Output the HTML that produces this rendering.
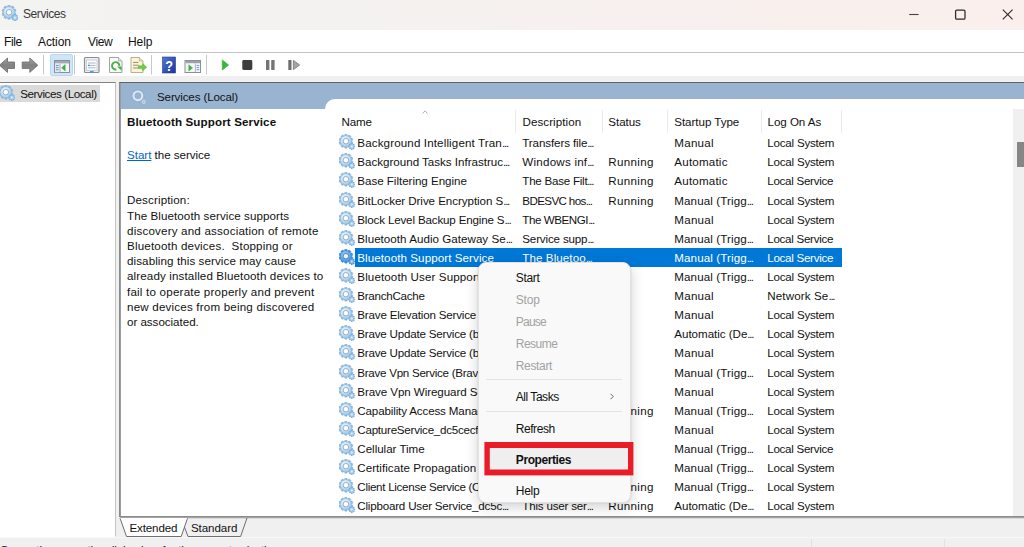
<!DOCTYPE html>
<html><head><meta charset="utf-8"><title>Services</title>
<style>
*{box-sizing:border-box;margin:0;padding:0}
html,body{width:1024px;height:547px;overflow:hidden;background:#f0f0f0}
body{position:relative;font-family:"Liberation Sans",sans-serif;font-size:11.6px;color:#111;letter-spacing:-0.12px}
.abs{position:absolute}
.ic{position:absolute;overflow:visible}
.t{position:absolute;white-space:nowrap;line-height:16px;height:16px}
.e{letter-spacing:-1.25px}
#title{left:0;top:0;width:1024px;height:30px;background:linear-gradient(90deg,#f3f3f2 0%,#f4f2f0 35%,#f7f0ee 60%,#faefec 100%)}
#menubar{left:0;top:30px;width:1024px;height:22px;background:#fff}
#toolbar{left:0;top:52px;width:1024px;height:24px;background:#fff;border-top:1px solid #c2c4c8}
#left{left:0;top:82px;width:116px;height:455px;background:#fff;border-top:1px solid #828282;border-right:1px solid #c4c4c4;border-bottom:1px solid #fff}
#right{left:119px;top:82px;width:910px;height:435px;background:#fff;border-top:1px solid #626262;border-left:1px solid #8a8a8a;border-bottom:1px solid #868686}
#right2{left:120px;top:83px;width:1px;height:434px;background:#9c9c9c}
#bluehdr{left:121px;top:83px;width:903px;height:26px;background:#99b4d1}
#listbg{left:325px;top:98.7px;width:699px;height:20px;background:#fff;border-top-left-radius:10px}
.row{position:absolute;left:355px;width:487px;height:19px;background:#0078d7}
.sel{color:#fff}
.sep{position:absolute;top:110px;width:1px;height:23px;background:#ebebeb}
#menu{left:477.5px;top:262px;width:153.5px;height:240.5px;background:#f9f9f9;border:1px solid #e2e2e2;border-radius:8px;box-shadow:0 4px 14px rgba(0,0,0,0.18),0 0 2px rgba(0,0,0,0.12)}
.dis{color:#a2a2a2}
.msep{position:absolute;left:486px;width:136px;height:1px;background:#e3e3e3}
</style></head><body>
<svg width="0" height="0" style="position:absolute">
<defs>
<radialGradient id="gg" cx="38%" cy="32%" r="75%"><stop offset="0" stop-color="#eef7fd"/><stop offset="0.55" stop-color="#c3dff3"/><stop offset="1" stop-color="#9fc6e6"/></radialGradient>
<symbol id="gear" viewBox="0 0 16 16">
<g transform="translate(6.9,7.2)">
<g fill="#8cb8de" stroke="#78a9d4" stroke-width="0.4"><rect x="-1.35" y="-7" width="2.7" height="14" rx="0.7" transform="rotate(0)"/><rect x="-1.35" y="-7" width="2.7" height="14" rx="0.7" transform="rotate(36)"/><rect x="-1.35" y="-7" width="2.7" height="14" rx="0.7" transform="rotate(72)"/><rect x="-1.35" y="-7" width="2.7" height="14" rx="0.7" transform="rotate(108)"/><rect x="-1.35" y="-7" width="2.7" height="14" rx="0.7" transform="rotate(144)"/></g>
<circle r="5.5" fill="url(#gg)" stroke="#95bee0" stroke-width="0.5"/>
<circle r="2.75" fill="#ffffff" stroke="#8aa6c4" stroke-width="0.9"/>
</g>
<g transform="translate(12.8,12.5)">
<g fill="#7caedb"><rect x="-0.85" y="-3.4" width="1.7" height="6.8" rx="0.3" transform="rotate(0)"/><rect x="-0.85" y="-3.4" width="1.7" height="6.8" rx="0.3" transform="rotate(45)"/><rect x="-0.85" y="-3.4" width="1.7" height="6.8" rx="0.3" transform="rotate(90)"/><rect x="-0.85" y="-3.4" width="1.7" height="6.8" rx="0.3" transform="rotate(135)"/></g>
<circle r="2.3" fill="#a3cbea"/>
<circle r="0.95" fill="#e9f3fb"/>
</g>
</symbol>
<radialGradient id="ggs" cx="38%" cy="32%" r="75%"><stop offset="0" stop-color="#9fcdf3"/><stop offset="0.55" stop-color="#6aacE6"/><stop offset="1" stop-color="#4d94dc"/></radialGradient>
<symbol id="gears" viewBox="0 0 16 16">
<g transform="translate(6.9,7.2)">
<g fill="#4288d8" stroke="#3a7fcf" stroke-width="0.4"><rect x="-1.35" y="-7" width="2.7" height="14" rx="0.7" transform="rotate(0)"/><rect x="-1.35" y="-7" width="2.7" height="14" rx="0.7" transform="rotate(36)"/><rect x="-1.35" y="-7" width="2.7" height="14" rx="0.7" transform="rotate(72)"/><rect x="-1.35" y="-7" width="2.7" height="14" rx="0.7" transform="rotate(108)"/><rect x="-1.35" y="-7" width="2.7" height="14" rx="0.7" transform="rotate(144)"/></g>
<circle r="5.5" fill="url(#ggs)" stroke="#4389d6" stroke-width="0.5"/>
<circle r="2.75" fill="#e9f3fc" stroke="#3e7fc6" stroke-width="0.9"/>
</g>
<g transform="translate(12.8,12.5)">
<g fill="#4a90da"><rect x="-0.85" y="-3.4" width="1.7" height="6.8" rx="0.3" transform="rotate(0)"/><rect x="-0.85" y="-3.4" width="1.7" height="6.8" rx="0.3" transform="rotate(45)"/><rect x="-0.85" y="-3.4" width="1.7" height="6.8" rx="0.3" transform="rotate(90)"/><rect x="-0.85" y="-3.4" width="1.7" height="6.8" rx="0.3" transform="rotate(135)"/></g>
<circle r="2.3" fill="#6fb0e8"/>
<circle r="0.95" fill="#d8eafa"/>
</g>
</symbol>
<symbol id="gearh" viewBox="0 0 16 16">
<g transform="translate(6.9,7.2)">
<g fill="#c3d9ec" stroke="#b4cde4" stroke-width="0.4"><rect x="-1.2" y="-6.8" width="2.4" height="13.6" rx="0.6" transform="rotate(0)"/><rect x="-1.2" y="-6.8" width="2.4" height="13.6" rx="0.6" transform="rotate(36)"/><rect x="-1.2" y="-6.8" width="2.4" height="13.6" rx="0.6" transform="rotate(72)"/><rect x="-1.2" y="-6.8" width="2.4" height="13.6" rx="0.6" transform="rotate(108)"/><rect x="-1.2" y="-6.8" width="2.4" height="13.6" rx="0.6" transform="rotate(144)"/></g>
<circle r="5.3" fill="#d6e6f3" stroke="#c0d6ea" stroke-width="0.5"/>
<circle r="3" fill="#a3bdd8" stroke="#eaf2f9" stroke-width="0.7"/>
</g>
<g transform="translate(12.8,12.6)">
<circle r="2.7" fill="#b4cbe2"/>
<circle r="1" fill="#9fb9d5"/>
</g>
</symbol>
</defs>
</svg>

<div id="title" class="abs"></div>
<svg class="ic" style="left:1.6px;top:5.1px;" width="16.2" height="16.2"><use href="#gear"/></svg>
<svg class="abs" style="left:900px;top:0" width="124" height="30" viewBox="0 0 124 30"><g stroke="#2a2a2a" stroke-width="1.1" fill="none"><path d="M9.2 14.5H18.6" stroke="#444"/><rect x="55.6" y="10" width="9.4" height="9.2" rx="1.3" stroke-width="1.25"/><path d="M102.8 9.6L112.6 19.4M112.6 9.6L102.8 19.4"/></g></svg>
<div id="menubar" class="abs"></div>
<div id="toolbar" class="abs"></div>
<svg class="abs" style="left:0;top:52px" width="320" height="26" viewBox="0 52 320 26">
<defs>
<linearGradient id="hb" x1="0" y1="0" x2="1" y2="1"><stop offset="0" stop-color="#4f79d8"/><stop offset="1" stop-color="#1b3497"/></linearGradient>
<linearGradient id="ar" x1="0" y1="0" x2="0" y2="1"><stop offset="0" stop-color="#a8a8a8"/><stop offset="0.5" stop-color="#808080"/><stop offset="1" stop-color="#949494"/></linearGradient>
</defs>
<!-- back / forward arrows -->
<path d="M-0.5 65.2L7.5 58V62H14.5V68.4H7.5V72.4Z" fill="url(#ar)" stroke="#666" stroke-width="0.8" stroke-linejoin="round"/>
<path d="M37.8 65.2L29.8 58V62H22.2V68.4H29.8V72.4Z" fill="url(#ar)" stroke="#6a6a6a" stroke-width="0.8" stroke-linejoin="round"/>
<!-- separators -->
<g stroke="#c9c9c9" stroke-width="1"><path d="M43.5 55V74.5M74.5 55V74.5M151.5 55V74.5M206.5 55V74.5"/></g>
<!-- highlighted button -->
<rect x="50.5" y="54.5" width="22" height="21" rx="1.5" fill="#cfe6f8" stroke="#b3d9f6" stroke-width="1"/>
<!-- show/hide console tree icon -->
<g>
<rect x="54.5" y="60.5" width="15" height="12" fill="#f4f6f8" stroke="#8b9098" stroke-width="1"/>
<rect x="55" y="61" width="14" height="2.4" fill="#a4a9b1"/>
<rect x="55" y="63.6" width="4.6" height="8.6" fill="#e3e8ee"/>
<path d="M60 63.5V72" stroke="#9aa0a8" stroke-width="0.8"/>
<path d="M56 65.5H58.6M56 67.6H58.6M56 69.7H58.6" stroke="#5b8fd0" stroke-width="0.9"/>
<path d="M65.2 64.6V71L61.6 67.8Z" fill="#3fae49" stroke="#3fae49" stroke-width="0.5" stroke-linejoin="round"/>
</g>
<!-- properties window icon -->
<g>
<rect x="84.5" y="57.5" width="14.5" height="15" rx="1" fill="#eef0f3" stroke="#8a8d93" stroke-width="1.2"/>
<rect x="86.6" y="60" width="10.4" height="10.6" fill="#fbfcfd" stroke="#b8bcc4" stroke-width="0.7"/>
<path d="M88 63H95.6M88 65.4H95.6M88 67.8H95.6" stroke="#9aa6b8" stroke-width="0.8"/>
<rect x="88" y="64.7" width="1.6" height="1.4" fill="#3f8fe0"/>
<rect x="90" y="71" width="3.6" height="1.6" fill="#35a4e8"/>
</g>
<!-- refresh icon -->
<g>
<path d="M109.5 57.5H118.5L122 61V72.5H109.5Z" fill="#fafafa" stroke="#9a9a9a" stroke-width="0.9"/>
<path d="M118.5 57.5V61H122" fill="#e8e8e8" stroke="#9a9a9a" stroke-width="0.7"/>
<path d="M119.4 66A3.7 3.7 0 1 0 116.4 69.5" fill="none" stroke="#45b24b" stroke-width="1.9"/>
<path d="M117 66.6H121.6V70.8Z" fill="#45b24b"/>
</g>
<!-- export list icon -->
<g>
<path d="M131 57.5H139.5L143 61V72.5H131Z" fill="#fbf5d6" stroke="#b0a987" stroke-width="0.9"/>
<path d="M139.5 57.5V61H143" fill="#efe8c2" stroke="#b0a987" stroke-width="0.7"/>
<path d="M133 62.4H138.5M133 65.2H138.5M133 68H138.5" stroke="#8a846e" stroke-width="0.9"/>
<path d="M138.2 65.8H142.6V63.6L146.8 67.2L142.6 70.8V68.6H138.2Z" fill="#6dc94e" stroke="#56b43c" stroke-width="0.5" stroke-linejoin="round"/>
</g>
<!-- help icon -->
<g>
<rect x="162.5" y="57" width="13" height="16" fill="url(#hb)" stroke="#203a9c" stroke-width="0.6"/>
<text x="169" y="70.8" font-family="Liberation Sans, sans-serif" font-weight="bold" font-size="14.5" fill="#fff" text-anchor="middle" transform="translate(169 0) scale(0.88 1) translate(-169 0)">?</text>
</g>
<!-- action pane icon -->
<g>
<rect x="185" y="60.5" width="15.5" height="12" fill="#f4f6f8" stroke="#8a8f98" stroke-width="1"/>
<rect x="185.5" y="61" width="14.5" height="2.2" fill="#9da2aa"/>
<path d="M195.4 63.4V72" stroke="#a6abb3" stroke-width="0.8"/>
<path d="M196.6 65.5H199.2M196.6 67.6H199.2M196.6 69.7H199.2" stroke="#5b8fd0" stroke-width="0.9"/>
<path d="M188.8 64.8V71L192.6 67.9Z" fill="#3fae49" stroke="#3fae49" stroke-width="0.5" stroke-linejoin="round"/>
</g>
<!-- play/stop/pause/resume -->
<path d="M222.3 60V70L228.6 65Z" fill="#3cb53a" stroke="#3cb53a" stroke-width="0.8" stroke-linejoin="round"/>
<rect x="242.3" y="60" width="10" height="10" rx="1.4" fill="#3d3d3d"/>
<rect x="266" y="60" width="3.4" height="10" rx="0.6" fill="#757575"/>
<rect x="271.2" y="60" width="3.4" height="10" rx="0.6" fill="#757575"/>
<rect x="288.3" y="60" width="3.2" height="10" rx="0.6" fill="#6f6f6f"/>
<path d="M293.4 60.4V69.6L299.6 65Z" fill="#a5a5a5" stroke="#7d7d7d" stroke-width="0.9" stroke-linejoin="round"/>
</svg>

<div id="left" class="abs"></div>
<div class="abs" style="left:0;top:85px;width:100px;height:16.5px;background:#dadada"></div>
<svg class="ic" style="left:-1.5px;top:85.2px;" width="16" height="16"><use href="#gear"/></svg>
<div id="right" class="abs"></div><div id="right2" class="abs"></div>
<div id="bluehdr" class="abs"></div><div id="listbg" class="abs"></div>
<svg class="abs" style="left:128px;top:86px" width="22" height="22" viewBox="128 86 22 22"><circle cx="137.9" cy="95.8" r="6.3" fill="none" stroke="#8ca8c8" stroke-width="1.1" stroke-dasharray="1.7 2.26" opacity="0.8"/><circle cx="143.8" cy="101.8" r="2.9" fill="none" stroke="#8ca8c8" stroke-width="0.9" stroke-dasharray="1.1 1.18" opacity="0.8"/><circle cx="137.9" cy="95.8" r="4.3" fill="none" stroke="#d9e9f5" stroke-width="2.2"/><circle cx="137.9" cy="95.8" r="3.1" fill="none" stroke="#8aa2bd" stroke-width="0.5" opacity="0.7"/><circle cx="143.8" cy="101.8" r="1.7" fill="#a9c2db" stroke="#c9dcec" stroke-width="1"/></svg>
<div class="sep" style="left:515px"></div>
<div class="sep" style="left:602px"></div>
<div class="sep" style="left:667px"></div>
<div class="sep" style="left:761px"></div>
<div class="sep" style="left:841px"></div>
<svg class="abs" style="left:422.2px;top:110.2px" width="6" height="4" viewBox="0 0 6 4"><path d="M0.5 3.4L3 0.9L5.5 3.4" stroke="#a6a6a6" stroke-width="0.9" fill="none"/></svg>
<svg class="ic" style="left:338.6px;top:134.2px;" width="16" height="16"><use href="#gear"/></svg>
<svg class="ic" style="left:338.6px;top:153.3px;" width="16" height="16"><use href="#gear"/></svg>
<svg class="ic" style="left:338.6px;top:172.4px;" width="16" height="16"><use href="#gear"/></svg>
<svg class="ic" style="left:338.6px;top:191.5px;" width="16" height="16"><use href="#gear"/></svg>
<svg class="ic" style="left:338.6px;top:210.6px;" width="16" height="16"><use href="#gear"/></svg>
<svg class="ic" style="left:338.6px;top:229.7px;" width="16" height="16"><use href="#gear"/></svg>
<div class="row" style="top:248.2px"></div>
<svg class="ic" style="left:338.6px;top:248.8px;" width="16" height="16"><use href="#gears"/></svg>
<svg class="ic" style="left:338.6px;top:267.9px;" width="16" height="16"><use href="#gear"/></svg>
<svg class="ic" style="left:338.6px;top:287.0px;" width="16" height="16"><use href="#gear"/></svg>
<svg class="ic" style="left:338.6px;top:306.1px;" width="16" height="16"><use href="#gear"/></svg>
<svg class="ic" style="left:338.6px;top:325.2px;" width="16" height="16"><use href="#gear"/></svg>
<svg class="ic" style="left:338.6px;top:344.4px;" width="16" height="16"><use href="#gear"/></svg>
<svg class="ic" style="left:338.6px;top:363.5px;" width="16" height="16"><use href="#gear"/></svg>
<svg class="ic" style="left:338.6px;top:382.6px;" width="16" height="16"><use href="#gear"/></svg>
<svg class="ic" style="left:338.6px;top:401.7px;" width="16" height="16"><use href="#gear"/></svg>
<svg class="ic" style="left:338.6px;top:420.8px;" width="16" height="16"><use href="#gear"/></svg>
<svg class="ic" style="left:338.6px;top:439.9px;" width="16" height="16"><use href="#gear"/></svg>
<svg class="ic" style="left:338.6px;top:459.0px;" width="16" height="16"><use href="#gear"/></svg>
<svg class="ic" style="left:338.6px;top:478.1px;" width="16" height="16"><use href="#gear"/></svg>
<svg class="ic" style="left:338.6px;top:497.2px;" width="16" height="16"><use href="#gear"/></svg>
<div class="abs" style="left:1013.4px;top:109px;width:11px;height:407px;background:#f0f0f0"></div>
<div class="abs" style="left:1017px;top:141.5px;width:7px;height:25px;background:#868686"></div>
<div class="abs" style="left:120px;top:516px;width:904px;height:1px;background:#8c8c8c"></div><div class="abs" style="left:120px;top:517px;width:904px;height:1px;background:#a4a4a4"></div><div class="abs" style="left:120px;top:518px;width:904px;height:1px;background:#d9d9d9"></div>
<div class="abs" style="left:117px;top:519px;width:907px;height:18px;background:#f0f0f0"></div>
<svg class="abs" style="left:117px;top:516px" width="140" height="22" viewBox="0 0 140 22"><path d="M3 2L9.5 20.5H64.2L70.6 2" fill="#fff" stroke="#6e6e6e" stroke-width="1"/><path d="M67.4 11L71 20.5H123.6L130 2" fill="none" stroke="#6e6e6e" stroke-width="1"/><path d="M3.6 2.6H70.2" stroke="#fff" stroke-width="1.4"/></svg>
<div class="abs" style="left:0;top:537px;width:1024px;height:10px;background:#f0f0f0;border-top:1px solid #f7f7f7"></div>
<div class="abs" style="left:811px;top:539px;width:1px;height:8px;background:#e2e2e2"></div>
<div class="abs" style="left:944px;top:539px;width:1px;height:8px;background:#e2e2e2"></div>
<div class="t" style="left:22.7px;top:6.2px;font-size:13.1px;letter-spacing:-0.49px;transform:scaleX(0.92);transform-origin:0 50%;color:#3a3a3a">Services</div>
<div class="t" style="left:4.0px;top:33.6px;font-size:12px;letter-spacing:-0.36px;">File</div>
<div class="t" style="left:38.0px;top:33.6px;font-size:12px;letter-spacing:-0.08px;">Action</div>
<div class="t" style="left:88.0px;top:33.6px;font-size:12px;letter-spacing:-0.37px;">View</div>
<div class="t" style="left:128.0px;top:33.6px;font-size:12px;letter-spacing:-0.10px;">Help</div>
<div class="t" style="left:20.2px;top:85.9px;letter-spacing:-0.41px;">Services (Local)</div>
<div class="t" style="left:157.0px;top:89.0px;letter-spacing:-0.14px;">Services (Local)</div>
<div class="t" style="left:127.0px;top:114.3px;font-weight:bold;letter-spacing:0.12px;">Bluetooth Support Service</div>
<div class="t" style="left:127.0px;top:147.3px;letter-spacing:-0.03px;"><span style="color:#0066cc;text-decoration:underline">Start</span> the service</div>
<div class="t" style="left:127.0px;top:192.3px;letter-spacing:0.13px;">Description:</div>
<div class="t" style="left:127.0px;top:207.5px;letter-spacing:0.08px;">The Bluetooth service supports</div>
<div class="t" style="left:127.0px;top:222.7px;letter-spacing:0.19px;">discovery and association of remote</div>
<div class="t" style="left:127.0px;top:238.0px;letter-spacing:0.17px;">Bluetooth devices.  Stopping or</div>
<div class="t" style="left:127.0px;top:253.2px;letter-spacing:0.09px;">disabling this service may cause</div>
<div class="t" style="left:127.0px;top:268.4px;letter-spacing:0.13px;">already installed Bluetooth devices to</div>
<div class="t" style="left:127.0px;top:283.6px;letter-spacing:0.21px;">fail to operate properly and prevent</div>
<div class="t" style="left:127.0px;top:298.8px;letter-spacing:0.19px;">new devices from being discovered</div>
<div class="t" style="left:127.0px;top:314.1px;letter-spacing:-0.03px;">or associated.</div>
<div class="t" style="left:341.4px;top:114.3px;letter-spacing:-0.11px;">Name</div>
<div class="t" style="left:522.5px;top:114.3px;letter-spacing:0.06px;">Description</div>
<div class="t" style="left:608.3px;top:114.3px;letter-spacing:-0.05px;">Status</div>
<div class="t" style="left:674.2px;top:114.3px;letter-spacing:-0.04px;">Startup Type</div>
<div class="t" style="left:767.6px;top:114.3px;letter-spacing:-0.07px;">Log On As</div>
<div class="t" style="left:357.3px;top:135.2px;letter-spacing:0.13px;">Background Intelligent Tran<span class="e">...</span></div>
<div class="t" style="left:522.3px;top:135.2px;letter-spacing:-0.11px;">Transfers file<span class="e">...</span></div>
<div class="t" style="left:674.3px;top:135.2px;letter-spacing:0.24px;">Manual</div>
<div class="t" style="left:767.3px;top:135.2px;letter-spacing:-0.22px;">Local System</div>
<div class="t" style="left:357.3px;top:154.3px;letter-spacing:-0.01px;">Background Tasks Infrastruc<span class="e">...</span></div>
<div class="t" style="left:522.3px;top:154.3px;letter-spacing:0.23px;">Windows inf<span class="e">...</span></div>
<div class="t" style="left:608.3px;top:154.3px;letter-spacing:0.31px;">Running</div>
<div class="t" style="left:674.3px;top:154.3px;letter-spacing:0.20px;">Automatic</div>
<div class="t" style="left:767.3px;top:154.3px;letter-spacing:-0.22px;">Local System</div>
<div class="t" style="left:357.3px;top:173.4px;letter-spacing:-0.03px;">Base Filtering Engine</div>
<div class="t" style="left:522.3px;top:173.4px;letter-spacing:-0.25px;">The Base Filt<span class="e">...</span></div>
<div class="t" style="left:608.3px;top:173.4px;letter-spacing:0.31px;">Running</div>
<div class="t" style="left:674.3px;top:173.4px;letter-spacing:0.20px;">Automatic</div>
<div class="t" style="left:767.3px;top:173.4px;letter-spacing:-0.29px;">Local Service</div>
<div class="t" style="left:357.3px;top:192.5px;letter-spacing:-0.06px;">BitLocker Drive Encryption S<span class="e">...</span></div>
<div class="t" style="left:522.3px;top:192.5px;letter-spacing:-0.62px;">BDESVC hos<span class="e">...</span></div>
<div class="t" style="left:608.3px;top:192.5px;letter-spacing:0.31px;">Running</div>
<div class="t" style="left:674.3px;top:192.5px;letter-spacing:0.11px;">Manual (Trigg<span class="e">...</span></div>
<div class="t" style="left:767.3px;top:192.5px;letter-spacing:-0.22px;">Local System</div>
<div class="t" style="left:357.3px;top:211.6px;letter-spacing:-0.16px;">Block Level Backup Engine S<span class="e">...</span></div>
<div class="t" style="left:522.3px;top:211.6px;letter-spacing:-0.44px;">The WBENGI<span class="e">...</span></div>
<div class="t" style="left:674.3px;top:211.6px;letter-spacing:0.24px;">Manual</div>
<div class="t" style="left:767.3px;top:211.6px;letter-spacing:-0.22px;">Local System</div>
<div class="t" style="left:357.3px;top:230.7px;letter-spacing:0.03px;">Bluetooth Audio Gateway Se<span class="e">...</span></div>
<div class="t" style="left:522.3px;top:230.7px;letter-spacing:-0.16px;">Service supp<span class="e">...</span></div>
<div class="t" style="left:674.3px;top:230.7px;letter-spacing:0.11px;">Manual (Trigg<span class="e">...</span></div>
<div class="t" style="left:767.3px;top:230.7px;letter-spacing:-0.29px;">Local Service</div>
<div class="t sel" style="left:357.3px;top:249.8px;letter-spacing:0.08px;">Bluetooth Support Service</div>
<div class="t sel" style="left:522.3px;top:249.8px;letter-spacing:0.08px;">The Bluetoo<span class="e">...</span></div>
<div class="t sel" style="left:674.3px;top:249.8px;letter-spacing:0.11px;">Manual (Trigg<span class="e">...</span></div>
<div class="t sel" style="left:767.3px;top:249.8px;letter-spacing:-0.29px;">Local Service</div>
<div class="t" style="left:357.3px;top:268.9px;letter-spacing:0.11px;">Bluetooth User Support Ser<span class="e">...</span></div>
<div class="t" style="left:522.3px;top:268.9px;letter-spacing:0.08px;">The Bluetoo<span class="e">...</span></div>
<div class="t" style="left:674.3px;top:268.9px;letter-spacing:0.11px;">Manual (Trigg<span class="e">...</span></div>
<div class="t" style="left:767.3px;top:268.9px;letter-spacing:-0.22px;">Local System</div>
<div class="t" style="left:357.3px;top:288.0px;letter-spacing:-0.26px;">BranchCache</div>
<div class="t" style="left:522.3px;top:288.0px;">This service <span class="e">...</span></div>
<div class="t" style="left:674.3px;top:288.0px;letter-spacing:0.24px;">Manual</div>
<div class="t" style="left:767.3px;top:288.0px;letter-spacing:0.12px;">Network Se<span class="e">...</span></div>
<div class="t" style="left:357.3px;top:307.1px;letter-spacing:-0.19px;">Brave Elevation Service (Bra<span class="e">...</span></div>
<div class="t" style="left:674.3px;top:307.1px;letter-spacing:0.24px;">Manual</div>
<div class="t" style="left:767.3px;top:307.1px;letter-spacing:-0.22px;">Local System</div>
<div class="t" style="left:357.3px;top:326.2px;letter-spacing:-0.20px;">Brave Update Service (brave)</div>
<div class="t" style="left:522.3px;top:326.2px;">Keeps your <span class="e">...</span></div>
<div class="t" style="left:674.3px;top:326.2px;letter-spacing:-0.03px;">Automatic (De<span class="e">...</span></div>
<div class="t" style="left:767.3px;top:326.2px;letter-spacing:-0.22px;">Local System</div>
<div class="t" style="left:357.3px;top:345.4px;letter-spacing:-0.20px;">Brave Update Service (brave<span class="e">...</span></div>
<div class="t" style="left:522.3px;top:345.4px;">Keeps your <span class="e">...</span></div>
<div class="t" style="left:674.3px;top:345.4px;letter-spacing:0.24px;">Manual</div>
<div class="t" style="left:767.3px;top:345.4px;letter-spacing:-0.22px;">Local System</div>
<div class="t" style="left:357.3px;top:364.5px;letter-spacing:-0.27px;">Brave Vpn Service (BraveVp<span class="e">...</span></div>
<div class="t" style="left:674.3px;top:364.5px;letter-spacing:0.11px;">Manual (Trigg<span class="e">...</span></div>
<div class="t" style="left:767.3px;top:364.5px;letter-spacing:-0.22px;">Local System</div>
<div class="t" style="left:357.3px;top:383.6px;letter-spacing:-0.08px;">Brave Vpn Wireguard Servic<span class="e">...</span></div>
<div class="t" style="left:674.3px;top:383.6px;letter-spacing:0.24px;">Manual</div>
<div class="t" style="left:767.3px;top:383.6px;letter-spacing:-0.22px;">Local System</div>
<div class="t" style="left:357.3px;top:402.7px;letter-spacing:-0.14px;">Capability Access Manager <span class="e">...</span></div>
<div class="t" style="left:522.3px;top:402.7px;">Provides fac<span class="e">...</span></div>
<div class="t" style="left:608.3px;top:402.7px;letter-spacing:0.31px;">Running</div>
<div class="t" style="left:674.3px;top:402.7px;letter-spacing:0.11px;">Manual (Trigg<span class="e">...</span></div>
<div class="t" style="left:767.3px;top:402.7px;letter-spacing:-0.22px;">Local System</div>
<div class="t" style="left:357.3px;top:421.8px;letter-spacing:-0.24px;">CaptureService_dc5cecf</div>
<div class="t" style="left:522.3px;top:421.8px;">Enables opti<span class="e">...</span></div>
<div class="t" style="left:674.3px;top:421.8px;letter-spacing:0.24px;">Manual</div>
<div class="t" style="left:767.3px;top:421.8px;letter-spacing:-0.22px;">Local System</div>
<div class="t" style="left:357.3px;top:440.9px;letter-spacing:-0.02px;">Cellular Time</div>
<div class="t" style="left:522.3px;top:440.9px;">This service <span class="e">...</span></div>
<div class="t" style="left:674.3px;top:440.9px;letter-spacing:0.11px;">Manual (Trigg<span class="e">...</span></div>
<div class="t" style="left:767.3px;top:440.9px;letter-spacing:-0.29px;">Local Service</div>
<div class="t" style="left:357.3px;top:460.0px;letter-spacing:0.04px;">Certificate Propagation</div>
<div class="t" style="left:522.3px;top:460.0px;">Copies user <span class="e">...</span></div>
<div class="t" style="left:674.3px;top:460.0px;letter-spacing:0.11px;">Manual (Trigg<span class="e">...</span></div>
<div class="t" style="left:767.3px;top:460.0px;letter-spacing:-0.22px;">Local System</div>
<div class="t" style="left:357.3px;top:479.1px;letter-spacing:-0.29px;">Client License Service (ClipS<span class="e">...</span></div>
<div class="t" style="left:522.3px;top:479.1px;">Provides inf<span class="e">...</span></div>
<div class="t" style="left:608.3px;top:479.1px;letter-spacing:0.31px;">Running</div>
<div class="t" style="left:674.3px;top:479.1px;letter-spacing:0.11px;">Manual (Trigg<span class="e">...</span></div>
<div class="t" style="left:767.3px;top:479.1px;letter-spacing:-0.22px;">Local System</div>
<div class="t" style="left:357.3px;top:498.2px;letter-spacing:-0.20px;">Clipboard User Service_dc5c<span class="e">...</span></div>
<div class="t" style="left:522.3px;top:498.2px;letter-spacing:-0.20px;">This user ser<span class="e">...</span></div>
<div class="t" style="left:608.3px;top:498.2px;letter-spacing:0.31px;">Running</div>
<div class="t" style="left:674.3px;top:498.2px;letter-spacing:-0.03px;">Automatic (De<span class="e">...</span></div>
<div class="t" style="left:767.3px;top:498.2px;letter-spacing:-0.22px;">Local System</div>
<div class="t" style="left:129.5px;top:520.3px;letter-spacing:-0.15px;">Extended</div>
<div class="t" style="left:190.9px;top:520.3px;letter-spacing:-0.07px;">Standard</div>
<div class="t" style="left:0.0px;top:542.2px;letter-spacing:-0.17px;">Opens the properties dialog box for the current selection.</div>
<div id="menu" class="abs"></div>
<div class="msep" style="top:379px"></div><div class="msep" style="top:410.5px"></div>
<svg class="abs" style="left:609px;top:392px" width="6" height="9" viewBox="0 0 6 9"><path d="M1.6 1.8L4.2 4.5L1.6 7.2" stroke="#555" stroke-width="0.9" fill="none"/></svg>
<div class="t m " style="left:515.8px;top:270.1px;font-size:12px;letter-spacing:-0.33px;">Start</div>
<div class="t m dis" style="left:515.8px;top:292.1px;font-size:12px;letter-spacing:-0.20px;">Stop</div>
<div class="t m dis" style="left:515.8px;top:314.0px;font-size:12px;letter-spacing:-0.77px;">Pause</div>
<div class="t m dis" style="left:515.8px;top:335.9px;font-size:12px;letter-spacing:-0.51px;">Resume</div>
<div class="t m dis" style="left:515.8px;top:357.9px;font-size:12px;letter-spacing:-0.34px;">Restart</div>
<div class="t m " style="left:515.8px;top:389.3px;font-size:12px;letter-spacing:-0.47px;">All Tasks</div>
<div class="t m " style="left:515.8px;top:421.1px;font-size:12px;letter-spacing:-0.45px;">Refresh</div>
<div class="t m " style="left:515.8px;top:483.4px;font-size:12px;letter-spacing:-0.27px;">Help</div>
<svg class="abs" style="left:480px;top:438px" width="160" height="42" viewBox="480 438 160 42"><rect x="484.4" y="442" width="149" height="33.4" fill="#ea1c27"/><rect x="489.8" y="448" width="138.2" height="21.5" fill="#efefef"/></svg>
<div class="t m top" style="left:515.8px;top:452.0px;font-size:12px;font-weight:bold;letter-spacing:-0.42px;">Properties</div>
</body></html>
